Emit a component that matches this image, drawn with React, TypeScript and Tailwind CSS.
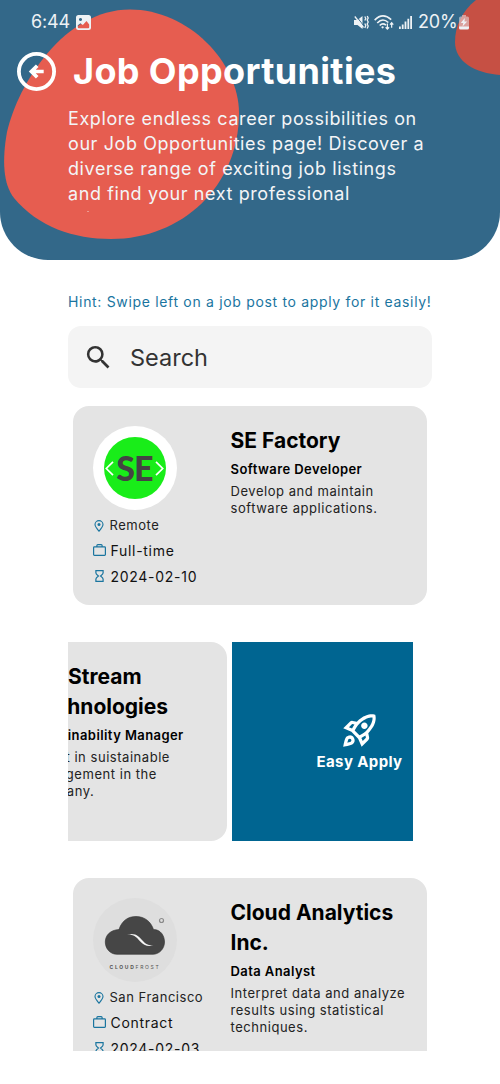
import type { ReactNode } from "react";
import { MdOutlineRocketLaunch, MdSearch } from "react-icons/md";

function HeaderBlobs() {
  return (
    <svg className="absolute inset-0" width="500" height="260" viewBox="0 0 500 260" aria-hidden="true">
      <path
        fill="#e65d50"
        d="M130 9.5C188 9.5 239 62 239 113C239 186 182 239 111 239C74 239 38 227 14 198C3 184 2 160 7 132C18 84 64 9.5 130 9.5Z"
      />
      <path fill="#c65044" d="M476 0C462 11 455 26 455 42C455 62 475 73 500 75V0Z" />
    </svg>
  );
}

function StatusBar() {
  return (
    <div className="flex h-[44px] items-center pl-[31px] pr-[31px] text-[#eef2f5]">
      <span className="w-[45px] whitespace-nowrap text-[18px] leading-[20px] tracking-[-0.200px]">6:44</span>
      <svg width="15" height="15" viewBox="0 0 15 15">
        <path
          fill="currentColor"
          fillRule="evenodd"
          d="M2.5 0h10A2.5 2.5 0 0 1 15 2.5v10a2.5 2.5 0 0 1-2.5 2.5h-10A2.5 2.5 0 0 1 0 12.500v-10A2.500 2.500 0 0 1 2.500 0ZM1.800 12.200q0 1 1 1h9.400q1 0 1-1V9.500L10.500 6 6.800 10 4.500 8.200 1.800 10.200ZM4.500 2.900a1.600 1.600 0 1 0 .01 0Z"
        />
      </svg>
      <div className="ml-auto flex items-center">
        <svg width="15" height="15" viewBox="0 0 15 15" fill="none" stroke="currentColor" strokeWidth="1.300">
          <path fill="currentColor" stroke="none" d="M0 5h3.500L8.500 1v13L3.500 10H0Z" />
          <path d="M2 .8l8 10.500" stroke="#336889" strokeWidth="1" />
          <path d="M.8 1.500L9.500 12.500" />
          <path d="M10.800 1.500l1 2-1 2M10.800 8.500l1 2-1 2.500M13.200 1l1 2-1 2 1 2-1 2 1 2-1 2.500" />
        </svg>
        <svg className="ml-[5px]" width="21" height="17" viewBox="0 0 22 17" fill="none" stroke="currentColor" strokeWidth="1.700">
          <path d="M.7 6Q9 -2.500 18 5.500M3.400 9Q9 3 15 8.500M6 11.700Q9 8.500 12.500 11.200" />
          <circle cx="9" cy="13.500" r="1.200" fill="currentColor" stroke="none" />
          <path d="M14 9.500v6M12.200 13.500l1.800 2 1.800-2M18.500 14V9M16.800 10.700l1.700-2 1.700 2" strokeWidth="1.300" />
        </svg>
        <svg className="ml-[4px]" width="13" height="13" viewBox="0 0 13 13" fill="currentColor">
          <path d="M0 10.500h1.800V13H0ZM2.800 8.500h1.800V13H2.800ZM5.600 5.500h1.800V13H5.600ZM8.400 2.700h1.800V13H8.400ZM11.200 0H13v13h-1.800Z" />
        </svg>
        <span className="ml-[6px] w-[41px] whitespace-nowrap text-[18px] leading-[20px] tracking-[-0.200px]">20%</span>
        <svg width="10" height="15" viewBox="0 0 10 15" fill="currentColor">
          <path opacity=".5" d="M3 0h4v1.500h1.500Q10 1.500 10 3v9H0V3Q0 1.500 1.500 1.500H3Z" />
          <path d="M0 11.500h10v1.500q0 1.500-1.500 1.500h-7Q0 14.500 0 13ZM5.800 3L1.800 8h2.500l-.8 3.500L8.200 6.500H5.500Z" />
        </svg>
      </div>
    </div>
  );
}

function Header() {
  return (
    <header className="relative h-[260px] overflow-hidden rounded-b-[48px] bg-[#336889]">
      <HeaderBlobs />
      <div className="relative">
        <StatusBar />
        <div className="flex h-[54px] items-center pl-[17px]">
          <svg width="39" height="39" viewBox="0 0 39 39" fill="none" stroke="white">
            <circle cx="19.500" cy="19.500" r="17.600" strokeWidth="3.800" />
            <path d="M26.700 19.500H14.500M20.200 13.700L14.400 19.500L20.200 25.300" strokeWidth="3.700" />
          </svg>
          <h1 className="ml-[17px] whitespace-nowrap text-[36px] font-bold leading-[44px] tracking-[0.360px] text-white">
            Job Opportunities
          </h1>
        </div>
        <p className="ml-[68px] mt-[8px] whitespace-nowrap text-[18px] leading-[25px] tracking-[0.590px] text-[#f3f5f7]">
          Explore endless career possibilities on
          <br />
          our Job Opportunities page! Discover a
          <br />
          diverse range of exciting job listings
          <br />
          and find your next professional
        </p>
        <div className="ml-[87px] mt-[5px] h-px w-[2px] bg-[#ee9a90]" />
      </div>
    </header>
  );
}

function PinIcon() {
  return (
    <svg width="10" height="12" viewBox="0 0 10 12" fill="none" stroke="#1a759f" strokeWidth="1.100">
      <path d="M5 11.200C2.800 8.700 1 6.700 1 4.600a4 4 0 0 1 8 0C9 6.700 7.200 8.700 5 11.200Z" />
      <circle cx="5" cy="4.500" r="1.500" fill="#1a759f" stroke="none" />
    </svg>
  );
}

function CaseIcon() {
  return (
    <svg width="13" height="12" viewBox="0 0 13 12" fill="none" stroke="#1a759f" strokeWidth="1.200">
      <rect x=".6" y="2.900" width="11.800" height="8.400" rx=".8" />
      <path d="M3.900 2.900V1.600q0-.9.900-.9h3.400q.9 0 .9.900v1.300" />
    </svg>
  );
}

function HourglassIcon() {
  return (
    <svg width="9" height="12" viewBox="0 0 9 12" fill="none" stroke="#1a759f" strokeWidth="1.200">
      <path d="M.9.700h7.200v2.200Q8.100 4 5.600 6q2.500 2 2.500 3.100v2.200H.9V9.100Q.9 8 3.400 6Q.9 4 .9 2.900Z" />
    </svg>
  );
}

function SeLogo() {
  return (
    <div className="flex size-[84px] items-center justify-center rounded-full bg-white">
      <div className="flex size-[62px] items-center justify-center rounded-full bg-[#19ed19]">
        <svg className="shrink-0" width="9" height="15" viewBox="0 0 9 15" fill="none" stroke="white" strokeWidth="1.700">
          <path d="M8 .8L1.300 7.500L8 14.200" />
        </svg>
        <span className="-mt-[1px] w-[41px] text-center font-['Lato'] text-[34px] font-black leading-[34px] tracking-[-0.800px] text-[#444]">
          SE
        </span>
        <svg className="shrink-0" width="9" height="15" viewBox="0 0 9 15" fill="none" stroke="white" strokeWidth="1.700">
          <path d="M1 .8L7.700 7.500L1 14.200" />
        </svg>
      </div>
    </div>
  );
}

function CloudLogo() {
  return (
    <div className="flex size-[84px] flex-col items-center rounded-full bg-[#dedede]">
      <svg className="mt-[16px]" width="64" height="42" viewBox="0 0 64 42">
        <path
          fill="#464646"
          stroke="#2f2f2f"
          strokeWidth=".6"
          d="M14 40.300C7 40.300 2.300 34.500 2.300 28C2.300 21.500 7 16 16 15.500C19 6.500 25 2.500 33 2.500C42 2.500 48 8 50.500 15.500C57.500 15.500 61.500 21.500 61.500 28C61.500 35 56 40.300 50 40.300Z"
        />
        <path fill="#f4f4f4" d="M24 20.500C33 18.500 36 22.500 40 27C43 30.500 46 31.500 50.500 31.600C44 32.800 40.500 31 37 27.200C33 22.800 31 20.300 24 20.500Z" />
        <circle cx="58.500" cy="6.500" r="2" fill="none" stroke="#8a8a8a" strokeWidth="1.200" />
      </svg>
      <div className="mt-[8px] whitespace-nowrap pl-px text-[5px] leading-[6px] tracking-[1.700px] text-[#555]">
        <b>CLOUD</b>FROST
      </div>
    </div>
  );
}

type Job = {
  details?: { logo: ReactNode; place: string; kind: string; date: string };
  company: string[];
  role: string;
  text: string[];
};

function JobCard({ job }: { job: Job }) {
  return (
    <article className="flex h-[199px] w-[354.500px] shrink-0 rounded-[16px] bg-[#e4e4e4] pl-[20px] pt-[20px] text-black">
      <div className="w-[138px] shrink-0">
        {job.details && (
          <>
            {job.details.logo}
            <div className="mt-[3px] flex h-[25px] items-center whitespace-nowrap text-[13px] tracking-[0.530px] text-[#222]">
              <span className="w-[17px] pl-px">
                <PinIcon />
              </span>
              {job.details.place}
            </div>
            <div className="flex h-[24px] items-center whitespace-nowrap text-[14px] tracking-[0.700px] text-[#111]">
              <span className="w-[18px]">
                <CaseIcon />
              </span>
              {job.details.kind}
            </div>
            <div className="flex h-[28px] items-center whitespace-nowrap text-[14px] tracking-[0.720px] text-[#111]">
              <span className="w-[18px] pl-[2px]">
                <HourglassIcon />
              </span>
              {job.details.date}
            </div>
          </>
        )}
      </div>
      <div className="whitespace-nowrap">
        <h2 className="text-[21px] font-bold leading-[30px]">
          {job.company.map((line) => (
            <span key={line} className="block">
              {line}
            </span>
          ))}
        </h2>
        <h3 className="mt-[3px] text-[13px] font-semibold leading-[20px] tracking-[0.420px]">{job.role}</h3>
        <p className="mt-[4px] text-[13px] leading-[17px] tracking-[0.540px] text-[#222]">
          {job.text.map((line) => (
            <span key={line} className="block">
              {line}
            </span>
          ))}
        </p>
      </div>
    </article>
  );
}

const seFactory: Job = {
  details: { logo: <SeLogo />, place: "Remote", kind: "Full-time", date: "2024-02-10" },
  company: ["SE Factory"],
  role: "Software Developer",
  text: ["Develop and maintain", "software applications."],
};

const ecoStream: Job = {
  company: ["EcoStream", "Technologies"],
  role: "Sustainability Manager",
  text: ["Assist in suistainable", "management in the", "company."],
};

const cloudAnalytics: Job = {
  details: { logo: <CloudLogo />, place: "San Francisco", kind: "Contract", date: "2024-02-03" },
  company: ["Cloud Analytics", "Inc."],
  role: "Data Analyst",
  text: ["Interpret data and analyze", "results using statistical", "techniques."],
};

export default function App() {
  return (
    <div className="h-[1084px] w-[500px] overflow-hidden bg-white font-['Inter',sans-serif]">
      <Header />
      <main className="ml-[67.500px] w-[364.500px]">
        <p className="mt-[32px] whitespace-nowrap pl-[0.500px] text-[14px] leading-[20px] tracking-[0.675px] text-[#1a759f]">
          Hint: Swipe left on a job post to apply for it easily!
        </p>
        <div className="mt-[14px] flex h-[62px] items-center rounded-[13px] bg-[#f4f4f4] pl-[15px] text-[#333]">
          <MdSearch size={31} />
          <span className="ml-[16.500px] mt-px text-[23.500px]">Search</span>
        </div>
        <div className="mt-[18px] h-[645px] overflow-hidden">
          <div className="pl-[5px]">
            <JobCard job={seFactory} />
          </div>
          <div className="mt-[37px] flex overflow-hidden">
            <div className="ml-[-195.500px] shrink-0">
              <JobCard job={ecoStream} />
            </div>
            <button className="ml-[5.500px] flex h-[199px] w-[181px] shrink-0 flex-col items-end bg-[#006591] pr-[10.500px] pt-[69px] text-white">
              <MdOutlineRocketLaunch size={39} className="mr-[24px]" />
              <span className="mt-[2px] whitespace-nowrap text-[15px] font-bold leading-[20px] tracking-[0.380px]">
                Easy Apply
              </span>
            </button>
          </div>
          <div className="mt-[37px] pl-[5px]">
            <JobCard job={cloudAnalytics} />
          </div>
        </div>
      </main>
    </div>
  );
}
